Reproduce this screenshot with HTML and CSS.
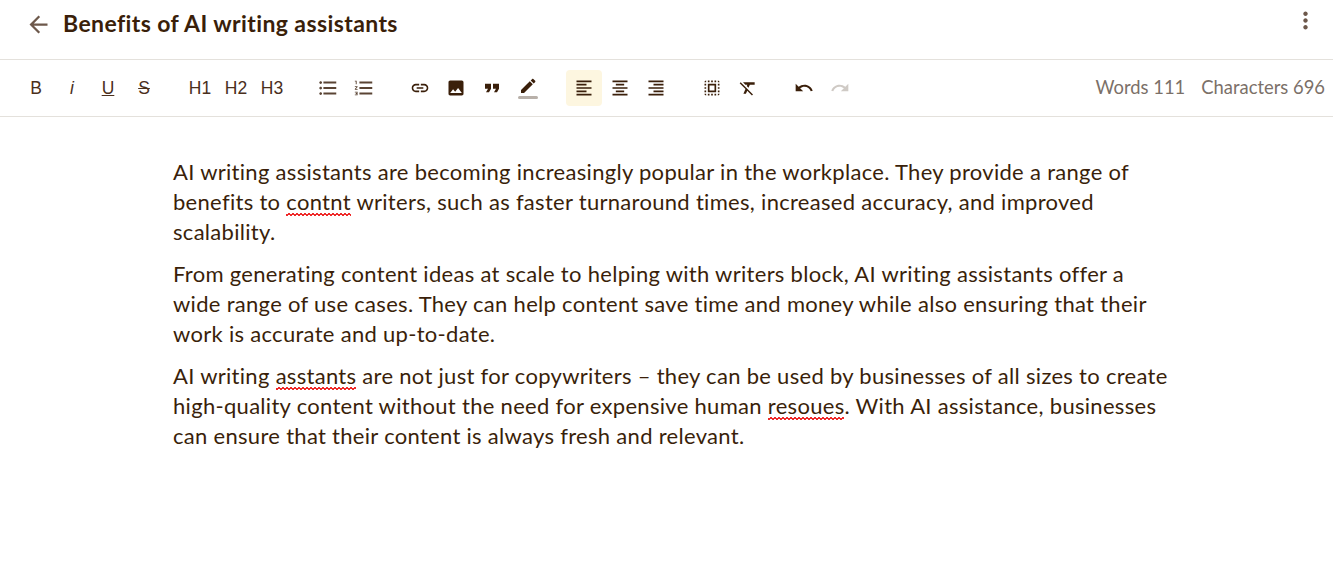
FILE: index.html
```html
<!DOCTYPE html>
<html lang="en">
<head>
    <meta charset="UTF-8">
    <meta name="viewport" content="width=device-width, initial-scale=1.0">
    <title>Benefits of AI writing assistants</title>
    <link rel="stylesheet" href="styles.css">
</head>
<body>
    <header class="header">
        <button class="back" aria-label="Back">
            <svg width="27" height="27" viewBox="0 0 24 24"><path d="M20 11H7.830l5.590-5.590L12 4l-8 8 8 8 1.410-1.410L7.830 13H20v-2z"/></svg>
        </button>
        <h1>Benefits of AI writing assistants</h1>
        <button class="more" aria-label="More">
            <svg width="27" height="27" viewBox="0 0 24 24"><path d="M12 8c1.100 0 2-.9 2-2s-.9-2-2-2-2 .9-2 2 .9 2 2 2zm0 2c-1.100 0-2 .9-2 2s.9 2 2 2 2-.9 2-2-.9-2-2-2zm0 6c-1.100 0-2 .9-2 2s.9 2 2 2 2-.9 2-2-.9-2-2-2z"/></svg>
        </button>
    </header>

    <div class="toolbar">
        <div class="group">
            <button class="tool txt">B</button>
            <button class="tool txt ital">i</button>
            <button class="tool txt under">U</button>
            <button class="tool txt strike">S</button>
        </div>
        <div class="group">
            <button class="tool txt">H1</button>
            <button class="tool txt">H2</button>
            <button class="tool txt">H3</button>
        </div>
        <div class="group">
            <button class="tool"><svg class="list-icon" width="22" height="22" viewBox="0 0 24 24"><path d="M4 10.500c-.83 0-1.500.67-1.500 1.500s.67 1.500 1.500 1.500 1.500-.67 1.500-1.500-.67-1.500-1.500-1.500zm0-6c-.83 0-1.500.67-1.500 1.500S3.170 7.500 4 7.500 5.500 6.830 5.500 6 4.830 4.500 4 4.500zm0 12c-.83 0-1.500.68-1.500 1.500s.68 1.500 1.500 1.500 1.500-.68 1.500-1.500-.67-1.500-1.500-1.500zM7 19h14v-2H7v2zm0-6h14v-2H7v2zm0-8v2h14V5H7z"/></svg></button>
            <button class="tool"><svg class="list-icon" width="22" height="22" viewBox="0 0 24 24"><path d="M2 17h2v.5H3v1h1v.5H2v1h3v-4H2v1zm1-9h1V4H2v1h1v3zm-1 3h1.800L2 13.100v.9h3v-1H3.200L5 10.900V10H2v1zm5-6v2h14V5H7zm0 14h14v-2H7v2zm0-6h14v-2H7v2z"/></svg></button>
        </div>
        <div class="group">
            <button class="tool"><svg width="20" height="20" viewBox="0 0 24 24"><path d="M3.900 12c0-1.710 1.390-3.100 3.100-3.100h4V7H7c-2.760 0-5 2.240-5 5s2.240 5 5 5h4v-1.900H7c-1.710 0-3.100-1.390-3.100-3.100zM8 13h8v-2H8v2zm9-6h-4v1.900h4c1.710 0 3.100 1.390 3.100 3.100s-1.390 3.100-3.100 3.100h-4V17h4c2.760 0 5-2.240 5-5s-2.240-5-5-5z"/></svg></button>
            <button class="tool"><svg width="20" height="20" viewBox="0 0 24 24"><path d="M21 19V5c0-1.100-.9-2-2-2H5c-1.100 0-2 .9-2 2v14c0 1.100.9 2 2 2h14c1.100 0 2-.9 2-2zM8.500 13.500l2.500 3.010L14.500 12l4.500 6H5l3.500-4.500z"/></svg></button>
            <button class="tool"><svg width="24" height="20" viewBox="0 0 24 24" preserveAspectRatio="none"><path d="M6 17h3l2-4V7H5v6h3zm8 0h3l2-4V7h-6v6h3z"/></svg></button>
            <button class="tool"><svg width="22" height="26" viewBox="0 0 22 26"><path d="M2.500 16.600v3h3l8.800-8.800-3-3-8.800 8.800zM16.700 8.400c.3-.3.3-.8 0-1.100l-1.900-1.900c-.3-.3-.8-.3-1.100 0l-1.500 1.500 3 3 1.500-1.500z" transform="translate(1.500 -1.500)"/><rect class="pen-bar" x="1" y="21" width="20" height="3" rx="1.500"/></svg></button>
        </div>
        <div class="group">
            <button class="tool active"><svg width="20" height="20" viewBox="0 0 24 24"><path d="M15 15H3v2h12v-2zm0-8H3v2h12V7zM3 13h18v-2H3v2zm0 8h18v-2H3v2zM3 3v2h18V3H3z"/></svg></button>
            <button class="tool"><svg width="20" height="20" viewBox="0 0 24 24"><path d="M7 15v2h10v-2H7zm-4 6h18v-2H3v2zm0-8h18v-2H3v2zm4-6v2h10V7H7zM3 3v2h18V3H3z"/></svg></button>
            <button class="tool"><svg width="20" height="20" viewBox="0 0 24 24"><path d="M3 21h18v-2H3v2zm6-4h12v-2H9v2zm-6-4h18v-2H3v2zm6-4h12V7H9v2zM3 3v2h18V3H3z"/></svg></button>
        </div>
        <div class="group">
            <button class="tool"><svg width="20" height="20" viewBox="0 0 24 24"><path d="M3 5h2V3c-1.100 0-2 .9-2 2zm0 8h2v-2H3v2zm4 8h2v-2H7v2zM3 9h2V7H3v2zm10-6h-2v2h2V3zm6 0v2h2c0-1.100-.9-2-2-2zM5 21v-2H3c0 1.100.9 2 2 2zm-2-4h2v-2H3v2zM9 3H7v2h2V3zm2 18h2v-2h-2v2zm8-8h2v-2h-2v2zm0 8c1.100 0 2-.9 2-2h-2v2zm0-12h2V7h-2v2zm0 8h2v-2h-2v2zm-4 4h2v-2h-2v2zm0-16h2V3h-2v2zM7 17h10V7H7v10zm2-8h6v6H9V9z"/></svg></button>
            <button class="tool"><svg width="20" height="20" viewBox="0 0 24 24"><path d="M3.270 5L2 6.270l6.970 6.970L6.500 19h3l1.570-3.660L16.730 21 18 19.730 3.550 5.270 3.270 5zM6 5v.180L8.820 8h2.400l-.72 1.680 2.100 2.100L14.210 8H20V5H6z"/></svg></button>
        </div>
        <div class="group">
            <button class="tool"><svg width="20" height="20" viewBox="0 0 24 24"><path d="M12.500 8c-2.650 0-5.050.99-6.900 2.600L2 7v9h9l-3.620-3.620c1.390-1.160 3.160-1.880 5.120-1.880 3.540 0 6.550 2.310 7.600 5.500l2.370-.78C21.080 11.030 17.150 8 12.500 8z"/></svg></button>
            <button class="tool off"><svg width="20" height="20" viewBox="0 0 24 24"><path d="M18.400 10.600C16.550 8.990 14.150 8 11.500 8c-4.650 0-8.580 3.030-9.960 7.220L3.900 16c1.050-3.190 4.050-5.500 7.600-5.500 1.950 0 3.730.72 5.120 1.880L13 16h9V7l-3.600 3.600z"/></svg></button>
        </div>
        <div class="counts">
            <span>Words 111</span>
            <span>Characters 696</span>
        </div>
    </div>

    <main class="editor">
        <p>AI writing assistants are becoming increasingly popular in the workplace. They provide a range of<br>benefits to <span class="typo">contnt</span> writers, such as faster turnaround times, increased accuracy, and improved<br>scalability.</p>
        <p>From generating content ideas at scale to helping with writers block, AI writing assistants offer a<br>wide range of use cases. They can help content save time and money while also ensuring that their<br>work is accurate and up-to-date.</p>
        <p>AI writing <span class="typo">asstants</span> are not just for copywriters – they can be used by businesses of all sizes to create<br>high-quality content without the need for expensive human <span class="typo">resoues</span>. With AI assistance, businesses<br>can ensure that their content is always fresh and relevant.</p>
    </main>
</body>
</html>
```

FILE: styles.css
```css
* {
    box-sizing: border-box;
}

body {
    margin: 0;
    background-color: #fff;
    color: #3a1f0a;
    font-family: Lato, "Open Sans", sans-serif;
}

button {
    border: none;
    background: none;
    padding: 0;
    display: flex;
    align-items: center;
    justify-content: center;
    color: inherit;
}

svg {
    fill: currentColor;
    display: block;
}

.header {
    height: 60px;
    border-bottom: 1px solid #e4e1dc;
    display: flex;
    align-items: flex-start;
    padding: 11px 14px 0 25px;
}

.back,
.more {
    color: #6d584b;
    width: 27px;
    height: 27px;
}

.header h1 {
    margin: 0 0 0 11px;
    font-size: 23px;
    line-height: 25px;
    font-weight: 700;
    letter-spacing: 0.4px;
    flex: 1;
}

.more {
    margin-top: -4px;
}

.toolbar {
    height: 57px;
    border-bottom: 1px solid #e4e1dc;
    display: flex;
    align-items: center;
    padding: 0 8px 0 18px;
    color: #3a1f0a;
}

.group {
    display: flex;
    margin-right: 20px;
}

.tool {
    width: 36px;
    height: 36px;
    border-radius: 4px;
}

.txt {
    font-family: "Liberation Sans", Arial, sans-serif;
    font-size: 17.5px;
    color: #4a2f1c;
}

.ital {
    font-style: italic;
}

.under {
    text-decoration: underline;
}

.strike {
    text-decoration: line-through;
}

.list-icon {
    color: #5a4434;
}

.pen-bar {
    fill: #b8b0a9;
}

.active {
    background-color: #fdf6e0;
}

.off {
    color: #cfcac5;
}

.counts {
    margin-left: auto;
    margin-top: -3px;
    display: flex;
    gap: 16px;
    font-size: 18.4px;
    color: #7b7068;
}

.editor {
    padding: 40px 0 0 173px;
    font-size: 22px;
    line-height: 30px;
    letter-spacing: 0.3px;
}

.editor p {
    margin: 0 0 12px;
    white-space: nowrap;
}

/* spellcheck squiggle */
.typo {
    position: relative;
}

.typo::after {
    content: "";
    position: absolute;
    left: 0;
    right: 0;
    bottom: -1px;
    height: 3px;
    background:
        linear-gradient(135deg, transparent 35%, #ee2a2a 35%, #ee2a2a 65%, transparent 65%) 0 0 / 4px 3px,
        linear-gradient(45deg, transparent 35%, #ee2a2a 35%, #ee2a2a 65%, transparent 65%) 2px 0 / 4px 3px;
}
```
